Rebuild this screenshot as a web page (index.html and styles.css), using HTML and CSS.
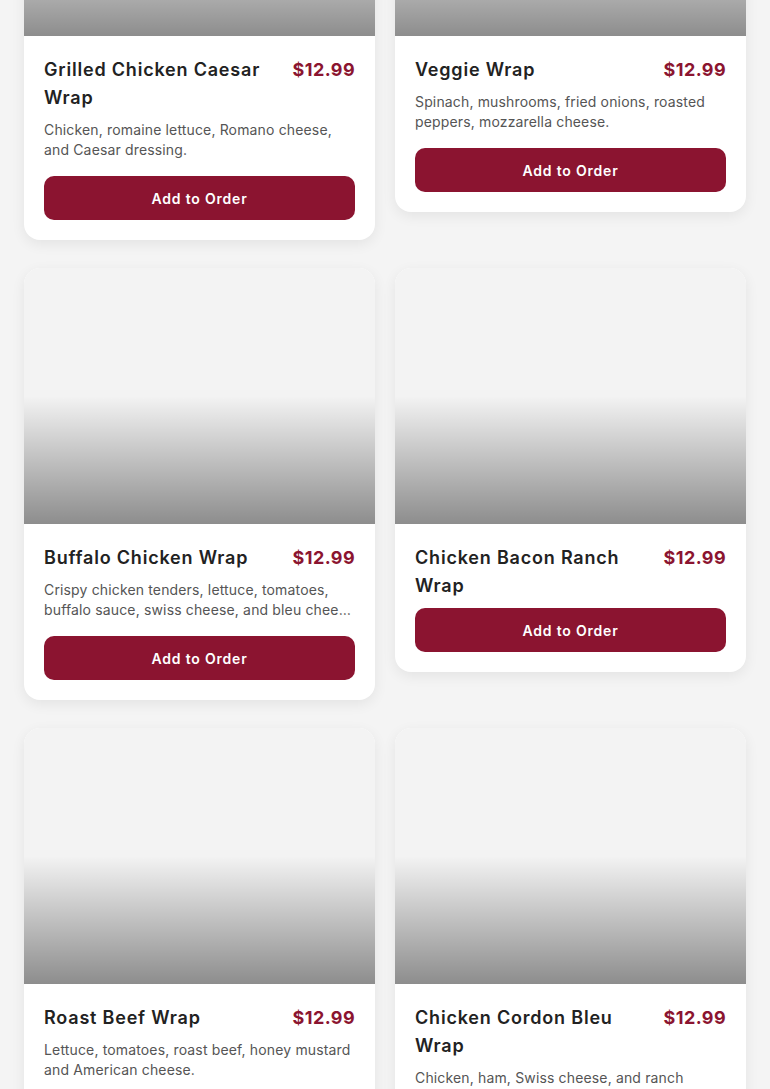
FILE: index.html
```html
<!DOCTYPE html>
<html lang="en">
<head>
    <meta charset="UTF-8">
    <meta name="viewport" content="width=device-width, initial-scale=1.0">
    <title>Wraps</title>
    <link rel="stylesheet" href="styles.css">
</head>
<body>

    <div class="menu-grid">

        <!-- Row 1 -->
        <div class="menu-card">
            <div class="card-image"></div>
            <div class="card-body">
                <div class="card-header">
                    <h3 class="item-name">Grilled Chicken Caesar Wrap</h3>
                    <span class="item-price">$12.99</span>
                </div>
                <p class="item-desc">Chicken, romaine lettuce, Romano cheese, and Caesar dressing.</p>
                <button class="add-btn">Add to Order</button>
            </div>
        </div>

        <div class="menu-card">
            <div class="card-image"></div>
            <div class="card-body">
                <div class="card-header">
                    <h3 class="item-name">Veggie Wrap</h3>
                    <span class="item-price">$12.99</span>
                </div>
                <p class="item-desc">Spinach, mushrooms, fried onions, roasted peppers, mozzarella cheese.</p>
                <button class="add-btn">Add to Order</button>
            </div>
        </div>

        <!-- Row 2 -->
        <div class="menu-card">
            <div class="card-image"></div>
            <div class="card-body">
                <div class="card-header">
                    <h3 class="item-name">Buffalo Chicken Wrap</h3>
                    <span class="item-price">$12.99</span>
                </div>
                <p class="item-desc">Crispy chicken tenders, lettuce, tomatoes, buffalo sauce, swiss cheese, and bleu cheese dressing.</p>
                <button class="add-btn">Add to Order</button>
            </div>
        </div>

        <div class="menu-card">
            <div class="card-image"></div>
            <div class="card-body">
                <div class="card-header">
                    <h3 class="item-name">Chicken Bacon Ranch Wrap</h3>
                    <span class="item-price">$12.99</span>
                </div>
                <button class="add-btn">Add to Order</button>
            </div>
        </div>

        <!-- Row 3 -->
        <div class="menu-card">
            <div class="card-image"></div>
            <div class="card-body">
                <div class="card-header">
                    <h3 class="item-name">Roast Beef Wrap</h3>
                    <span class="item-price">$12.99</span>
                </div>
                <p class="item-desc">Lettuce, tomatoes, roast beef, honey mustard and American cheese.</p>
                <button class="add-btn">Add to Order</button>
            </div>
        </div>

        <div class="menu-card">
            <div class="card-image"></div>
            <div class="card-body">
                <div class="card-header">
                    <h3 class="item-name">Chicken Cordon Bleu Wrap</h3>
                    <span class="item-price">$12.99</span>
                </div>
                <p class="item-desc">Chicken, ham, Swiss cheese, and ranch dressing.</p>
                <button class="add-btn">Add to Order</button>
            </div>
        </div>

    </div>

</body>
</html>
```

FILE: styles.css
```css
* {
    margin: 0;
    padding: 0;
    box-sizing: border-box;
}

body {
    font-family: 'Inter', 'Open Sans', sans-serif;
    background-color: #f4f4f4;
    color: #222;
}

/* page is scrolled past the header, first row is cut off */
.menu-grid {
    display: grid;
    grid-template-columns: 1fr 1fr;
    column-gap: 20px;
    row-gap: 28px;
    align-items: start;
    padding: 24px;
    margin-top: -244px;
}

.menu-card {
    background-color: #fff;
    border-radius: 16px;
    overflow: hidden;
    box-shadow: 0 4px 14px rgba(0, 0, 0, 0.07);
}

.card-image {
    height: 256px;
    background-color: #f3f3f3;
    background-image: linear-gradient(to bottom, rgba(0, 0, 0, 0) 50%, rgba(0, 0, 0, 0.42) 100%);
}

.card-body {
    display: flex;
    flex-direction: column;
    gap: 8px;
    padding: 20px;
}

.card-header {
    display: flex;
    justify-content: space-between;
    align-items: flex-start;
    gap: 16px;
}

.item-name {
    font-size: 18px;
    line-height: 28px;
    font-weight: 600;
    letter-spacing: 0.8px;
    color: #222;
}

.item-price {
    font-size: 18px;
    line-height: 28px;
    font-weight: 700;
    letter-spacing: 0.4px;
    color: #8b1530;
    white-space: nowrap;
}

.item-desc {
    font-size: 14px;
    line-height: 20px;
    letter-spacing: 0.15px;
    color: #555;
    margin-bottom: 8px;
    display: -webkit-box;
    -webkit-line-clamp: 2;
    -webkit-box-orient: vertical;
    overflow: hidden;
}

.add-btn {
    height: 44px;
    width: 100%;
    border: none;
    border-radius: 10px;
    background-color: #8b1430;
    color: #fff;
    font-family: inherit;
    font-size: 14px;
    font-weight: 600;
    letter-spacing: 0.8px;
    cursor: pointer;
}

.add-btn:hover {
    background-color: #a01a3a;
}
```
